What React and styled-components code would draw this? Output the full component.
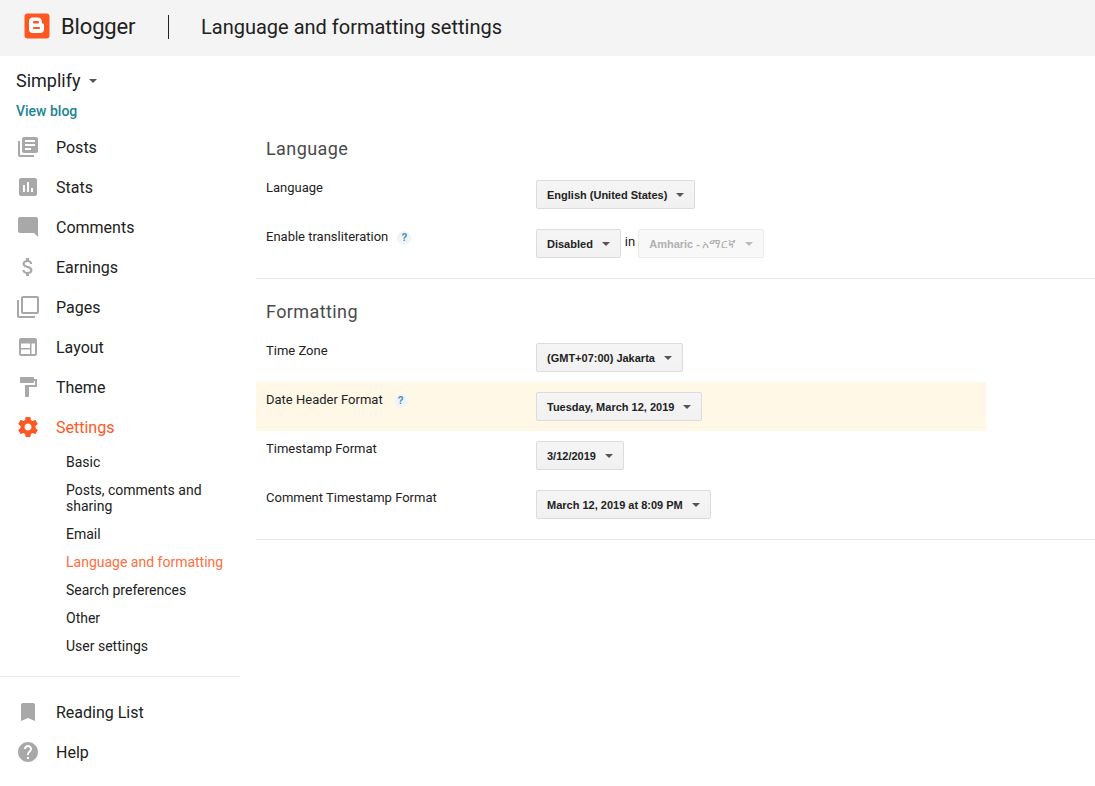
import React from "react";
import styled, { createGlobalStyle } from "styled-components";

const GlobalStyle = createGlobalStyle`
  html, body {
    margin: 0;
    padding: 0;
    background: #fff;
    font-family: Roboto, "Liberation Sans", Arial, sans-serif;
    color: #212121;
  }
`;

const Page = styled.div`
  width: 1095px;
  height: 786px;
  overflow: hidden;
`;

const TopBar = styled.header`
  height: 56px;
  background: #f4f4f4;
  display: flex;
  align-items: center;
  padding-left: 24px;
`;

const LogoMark = styled.svg`
  width: 26px;
  height: 26px;
  flex: none;
  margin-top: -4px;
`;

const BrandName = styled.div`
  font-size: 22px;
  letter-spacing: -0.15px;
  line-height: 24px;
  margin: -2px 0 0 11px;
  color: #212121;
  width: 107px;
`;

const TopDivider = styled.div`
  width: 1px;
  height: 24px;
  margin-top: -2px;
  background: #212121;
`;

const PageTitle = styled.h1`
  margin: -2px 0 0 32px;
  font-size: 20px;
  font-weight: 400;
  color: #212121;
`;

const Body = styled.div`
  display: flex;
  align-items: flex-start;
`;

const Sidebar = styled.nav`
  width: 240px;
  flex: none;
`;

const BlogHeader = styled.div`
  height: 71px;
  padding: 13px 0 0 16px;
  box-sizing: border-box;
`;

const BlogName = styled.div`
  display: flex;
  align-items: center;
  font-size: 18px;
  line-height: 24px;
  color: #212121;
`;

const Caret = styled.span`
  display: inline-block;
  width: 0;
  height: 0;
  flex: none;
  border-left: 4px solid transparent;
  border-right: 4px solid transparent;
  border-top: 4px solid ${(p) => p.$color || "#555"};
  margin-left: ${(p) => p.$gap || 8}px;
`;

const ViewBlog = styled.div`
  font-size: 14px;
  font-weight: 500;
  line-height: 20px;
  margin-top: 8px;
  color: #1a8491;
`;

const NavItem = styled.div`
  height: 40px;
  display: flex;
  align-items: center;
  padding-left: 16px;
  font-size: 16px;
  color: ${(p) => (p.$active ? "#ff5722" : "#212121")};
`;

const NavIcon = styled.svg`
  width: 24px;
  height: 24px;
  flex: none;
  margin-right: 16px;
  fill: ${(p) => (p.$active ? "#ff5722" : "#a8a8a8")};
`;

const SubList = styled.div`
  margin-top: 1px;
`;

const SubItem = styled.div`
  padding: 6px 16px 6px 66px;
  font-size: 14px;
  line-height: 16px;
  color: ${(p) => (p.$active ? "#ff6e40" : "#212121")};
`;

const SideDivider = styled.div`
  height: 1px;
  background: #e8e8e8;
  margin: 16px 0 15px;
`;

const Main = styled.main`
  flex: 1;
  margin-left: 16px;
  padding-top: 80px;
`;

const Section = styled.section`
  border-bottom: 1px solid #e6e6e6;
  padding-bottom: 10px;
  & + & {
    padding-top: 20px;
  }
`;

const SectionTitle = styled.h2`
  margin: 0 0 9px 10px;
  padding-top: 1px;
  font-size: 18px;
  line-height: 24px;
  font-weight: 400;
  letter-spacing: 0.4px;
  color: #4a4a4a;
`;

const Row = styled.div`
  width: 730px;
  height: 49px;
  box-sizing: border-box;
  padding: 10px 0 0 10px;
  display: flex;
  background: ${(p) => (p.$highlight ? "#fff8e7" : "transparent")};
`;

const Label = styled.div`
  width: 270px;
  flex: none;
  display: flex;
  align-items: flex-start;
  font-size: 13px;
  line-height: 16px;
  color: #222;
`;

const HelpBadge = styled.span`
  width: 14px;
  height: 14px;
  margin: 2px 0 0 ${(p) => p.$gap || 9}px;
  border-radius: 50%;
  background: #f1f4f7;
  color: #3a8fb5;
  font: bold 10px/14px "Liberation Sans", Arial, sans-serif;
  text-align: center;
`;

const Controls = styled.div`
  display: flex;
  align-items: flex-start;
  font-size: 13px;
  color: #222;
`;

const SelectBox = styled.div`
  height: 29px;
  box-sizing: border-box;
  display: flex;
  align-items: center;
  padding: 0 10px 0 10px;
  border: 1px solid ${(p) => (p.$disabled ? "#eaeaea" : "#dcdcdc")};
  border-radius: 2px;
  background: ${(p) =>
    p.$disabled ? "#f8f8f8" : "linear-gradient(#f5f5f5, #f1f1f1)"};
  color: ${(p) => (p.$disabled ? "#b0b0b0" : "#222")};
  font: bold 11px "Liberation Sans", Arial, "Noto Sans", sans-serif;
  white-space: nowrap;
`;

const Ethiopic = styled.span`
  font-weight: 400;
  font-size: 12px;
  margin-left: 2px;
`;

const InWord = styled.span`
  margin: 0 3px 0 4px;
  line-height: 26px;
`;

const ICONS = {
  posts:
    "M4 6H2v14c0 1.1.9 2 2 2h14v-2H4V6zm16-4H8c-1.1 0-2 .9-2 2v12c0 1.1.9 2 2 2h12c1.1 0 2-.9 2-2V4c0-1.1-.9-2-2-2zm-1 9H9V9h10v2zm-4 4H9v-2h6v2zm4-8H9V5h10v2z",
  stats:
    "M19 3H5c-1.1 0-2 .9-2 2v14c0 1.1.9 2 2 2h14c1.1 0 2-.9 2-2V5c0-1.1-.9-2-2-2zM9 17H7v-7h2v7zm4 0h-2V7h2v10zm4 0h-2v-4h2v4z",
  comments:
    "M21.99 4c0-1.1-.89-2-1.99-2H4c-1.1 0-2 .9-2 2v12c0 1.1.9 2 2 2h14l4 4-.01-18z",
  earnings:
    "M11.8 10.9c-2.27-.59-3-1.2-3-2.15 0-1.09 1.01-1.85 2.7-1.85 1.78 0 2.44.85 2.5 2.1h2.21c-.07-1.72-1.12-3.3-3.21-3.81V3h-3v2.16c-1.94.42-3.5 1.68-3.5 3.61 0 2.31 1.91 3.46 4.7 4.13 2.5.6 3 1.48 3 2.41 0 .69-.49 1.79-2.7 1.79-2.06 0-2.87-.92-2.98-2.1h-2.2c.12 2.19 1.76 3.42 3.68 3.83V21h3v-2.15c1.95-.37 3.5-1.5 3.5-3.55 0-2.84-2.43-3.81-4.7-4.4z",
  pages:
    "M3 5H1v16c0 1.1.9 2 2 2h16v-2H3V5zm18-4H7c-1.1 0-2 .9-2 2v14c0 1.1.9 2 2 2h14c1.1 0 2-.9 2-2V3c0-1.1-.9-2-2-2zm0 16H7V3h14v14z",
  layout:
    "M5 3h14c1.1 0 2 .9 2 2v14c0 1.1-.9 2-2 2H5c-1.1 0-2-.9-2-2V5c0-1.1.9-2 2-2zm0 5.5V13h9V8.5H5zm0 6V19h9v-4.5H5zm10.5-6V19H19V8.5h-3.5z",
  theme:
    "M18 4V3c0-.55-.45-1-1-1H5c-.55 0-1 .45-1 1v4c0 .55.45 1 1 1h12c.55 0 1-.45 1-1V6h1v4H9v11c0 .55.45 1 1 1h2c.55 0 1-.45 1-1v-9h8V4h-3z",
  settings:
    "M19.43 12.98c.04-.32.07-.64.07-.98s-.03-.66-.07-.98l2.11-1.65c.19-.15.24-.42.12-.64l-2-3.46c-.12-.22-.39-.3-.61-.22l-2.49 1c-.52-.4-1.08-.73-1.69-.98l-.38-2.65C14.46 2.18 14.25 2 14 2h-4c-.25 0-.46.18-.49.42l-.38 2.65c-.61.25-1.17.59-1.69.98l-2.49-1c-.23-.09-.49 0-.61.22l-2 3.46c-.13.22-.07.49.12.64l2.11 1.65c-.04.32-.07.65-.07.98s.03.66.07.98l-2.11 1.65c-.19.15-.24.42-.12.64l2 3.46c.12.22.39.3.61.22l2.49-1c.52.4 1.08.73 1.69.98l.38 2.65c.03.24.24.42.49.42h4c.25 0 .46-.18.49-.42l.38-2.65c.61-.25 1.17-.59 1.69-.98l2.49 1c.23.09.49 0 .61-.22l2-3.46c.12-.22.07-.49-.12-.64l-2.11-1.65zM12 15.5c-1.93 0-3.5-1.57-3.5-3.5s1.57-3.5 3.5-3.5 3.5 1.57 3.5 3.5-1.57 3.5-3.5 3.5z",
  bookmark:
    "M17 3H7c-1.1 0-1.99.9-1.99 2L5 21l7-3 7 3V5c0-1.1-.9-2-2-2z",
  help:
    "M12 2C6.48 2 2 6.48 2 12s4.48 10 10 10 10-4.48 10-10S17.52 2 12 2zm1 17h-2v-2h2v2zm2.07-7.75l-.9.92C13.45 12.9 13 13.5 13 15h-2v-.5c0-1.1.45-2.1 1.17-2.83l1.24-1.26c.37-.36.59-.86.59-1.41 0-1.1-.9-2-2-2s-2 .9-2 2H8c0-2.21 1.79-4 4-4s4 1.79 4 4c0 .88-.36 1.68-.93 2.25z",
};

const Item = ({ icon, label, active }) => (
  <NavItem $active={active}>
    <NavIcon $active={active} viewBox="0 0 24 24">
      <path d={ICONS[icon]} fillRule="evenodd" />
    </NavIcon>
    {label}
  </NavItem>
);

const Select = ({ children, disabled }) => (
  <SelectBox $disabled={disabled}>
    {children}
    <Caret $gap={9} $color={disabled ? "#bbb" : "#555"} />
  </SelectBox>
);

const subItems = [
  "Basic",
  "Posts, comments and sharing",
  "Email",
  "Language and formatting",
  "Search preferences",
  "Other",
  "User settings",
];

export default function App() {
  return (
    <Page>
      <GlobalStyle />
      <TopBar>
        <LogoMark viewBox="0 0 26 26">
          <rect x="0.5" y="0.5" width="25" height="25" rx="3" fill="#ff5722" />
          <path
            fill="#fff"
            fillRule="evenodd"
            d="M8.500 4.500h5.500c2.200 0 3.800 1.500 3.800 3.600v1.300c0 .6.500.9 1 1 .7.1 1.200.6 1.200 1.400v5c0 2-1.600 3.200-3.400 3.200H8.500c-2 0-3.500-1.400-3.500-3.300V8c0-1.900 1.500-3.500 3.500-3.500zM10 8c-.6 0-1 .5-1 1.200s.4 1.300 1 1.300h4c.6 0 1-.6 1-1.300S14.600 8 14 8h-4zm0 6c-.6 0-1 .4-1 1s.4 1 1 1h5c.6 0 1-.4 1-1s-.4-1-1-1h-5z"
          />
        </LogoMark>
        <BrandName>Blogger</BrandName>
        <TopDivider />
        <PageTitle>Language and formatting settings</PageTitle>
      </TopBar>
      <Body>
        <Sidebar>
          <BlogHeader>
            <BlogName>
              Simplify
              <Caret $gap={8} />
            </BlogName>
            <ViewBlog>View blog</ViewBlog>
          </BlogHeader>
          <Item icon="posts" label="Posts" />
          <Item icon="stats" label="Stats" />
          <Item icon="comments" label="Comments" />
          <Item icon="earnings" label="Earnings" />
          <Item icon="pages" label="Pages" />
          <Item icon="layout" label="Layout" />
          <Item icon="theme" label="Theme" />
          <Item icon="settings" label="Settings" active />
          <SubList>
            {subItems.map((s) => (
              <SubItem key={s} $active={s === "Language and formatting"}>
                {s}
              </SubItem>
            ))}
          </SubList>
          <SideDivider />
          <Item icon="bookmark" label="Reading List" />
          <Item icon="help" label="Help" />
        </Sidebar>
        <Main>
          <Section>
            <SectionTitle>Language</SectionTitle>
            <Row>
              <Label>Language</Label>
              <Controls>
                <Select>English (United States)</Select>
              </Controls>
            </Row>
            <Row>
              <Label>
                Enable transliteration
                <HelpBadge>?</HelpBadge>
              </Label>
              <Controls>
                <Select>Disabled</Select>
                <InWord>in</InWord>
                <Select disabled>
                  Amharic -<Ethiopic>አማርኛ</Ethiopic>
                </Select>
              </Controls>
            </Row>
          </Section>
          <Section>
            <SectionTitle>Formatting</SectionTitle>
            <Row>
              <Label>Time Zone</Label>
              <Controls>
                <Select>(GMT+07:00) Jakarta</Select>
              </Controls>
            </Row>
            <Row $highlight>
              <Label>
                Date Header Format
                <HelpBadge $gap={11}>?</HelpBadge>
              </Label>
              <Controls>
                <Select>Tuesday, March 12, 2019</Select>
              </Controls>
            </Row>
            <Row>
              <Label>Timestamp Format</Label>
              <Controls>
                <Select>3/12/2019</Select>
              </Controls>
            </Row>
            <Row>
              <Label>Comment Timestamp Format</Label>
              <Controls>
                <Select>March 12, 2019 at 8:09 PM</Select>
              </Controls>
            </Row>
          </Section>
        </Main>
      </Body>
    </Page>
  );
}
